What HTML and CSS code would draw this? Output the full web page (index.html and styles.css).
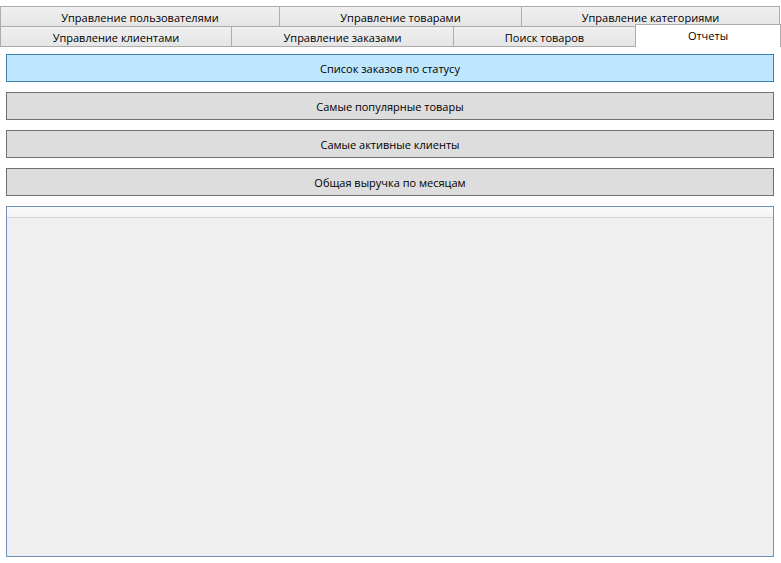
FILE: index.html
```html
<!DOCTYPE html>
<html lang="ru">
<head>
<meta charset="utf-8">
<link rel="stylesheet" href="styles.css">
</head>
<body>
<div class="window">
  <div class="tabs">
    <div class="tab-row row1">
      <div class="tab t-users">Управление пользователями</div>
      <div class="tab t-goods">Управление товарами</div>
      <div class="tab t-cats last">Управление категориями</div>
    </div>
    <div class="tab-row row2">
      <div class="tab t-clients">Управление клиентами</div>
      <div class="tab t-orders">Управление заказами</div>
      <div class="tab t-search">Поиск товаров</div>
      <div class="tab t-reports selected">Отчеты</div>
    </div>
  </div>
  <div class="content">
    <div class="btn active">Список заказов по статусу</div>
    <div class="btn">Самые популярные товары</div>
    <div class="btn">Самые активные клиенты</div>
    <div class="btn">Общая выручка по месяцам</div>
    <div class="grid">
      <div class="grid-header"></div>
      <div class="grid-body"></div>
    </div>
  </div>
</div>
</body>
</html>
```

FILE: styles.css
```css
* { box-sizing: border-box; }
html, body { margin: 0; padding: 0; background: #ffffff; }
body {
  width: 781px;
  height: 563px;
  overflow: hidden;
  font-family: "Open Sans", "Noto Sans", sans-serif;
  font-size: 11px;
  color: #000;
}
.window { padding-top: 6px; }
.tabs { display: flex; flex-direction: column; }
.tab-row { display: flex; height: 20px; }
.row2 { height: 21px; }
.tab {
  display: flex;
  align-items: center;
  justify-content: center;
  border: 1px solid #acacac;
  border-right: none;
  background: linear-gradient(#f0f0f0, #e5e5e5);
  white-space: nowrap;
  line-height: 1;
  padding-top: 1px;
}
.row1 .tab { border-bottom: none; height: 20px; }
.row2 .tab { height: 21px; }
.tab.last { border-right: 1px solid #acacac; }
.t-users { width: 279px; }
.t-goods { width: 242px; }
.t-cats { width: 259px; }
.t-clients { width: 231px; }
.t-orders { width: 222px; }
.t-search { width: 182px; }
.t-reports { width: 146px; }
.tab.selected {
  position: relative;
  z-index: 2;
  margin-top: -2px;
  height: 23px;
  background: #ffffff;
  border: 1px solid #acacac;
  border-bottom: none;
  padding-top: 0;
  padding-bottom: 2px;
}
.content {
  display: flex;
  flex-direction: column;
  gap: 10px;
  padding: 7px 7px 6px 6px;
}
.btn {
  height: 28px;
  display: flex;
  align-items: center;
  justify-content: center;
  background: #dddddd;
  border: 1px solid #707070;
  line-height: 1;
  padding-top: 1px;
}
.btn.active {
  background: #bee6fd;
  border-color: #3c7fb1;
}
.grid {
  height: 351px;
  border: 1px solid #6d92b8;
  background: #efefef;
  display: flex;
  flex-direction: column;
}
.grid-header {
  height: 11px;
  background: linear-gradient(#fbfbfb, #f3f3f3);
  border-bottom: 1px solid #d5d5d5;
}
.grid-body { flex: 1; }
```
